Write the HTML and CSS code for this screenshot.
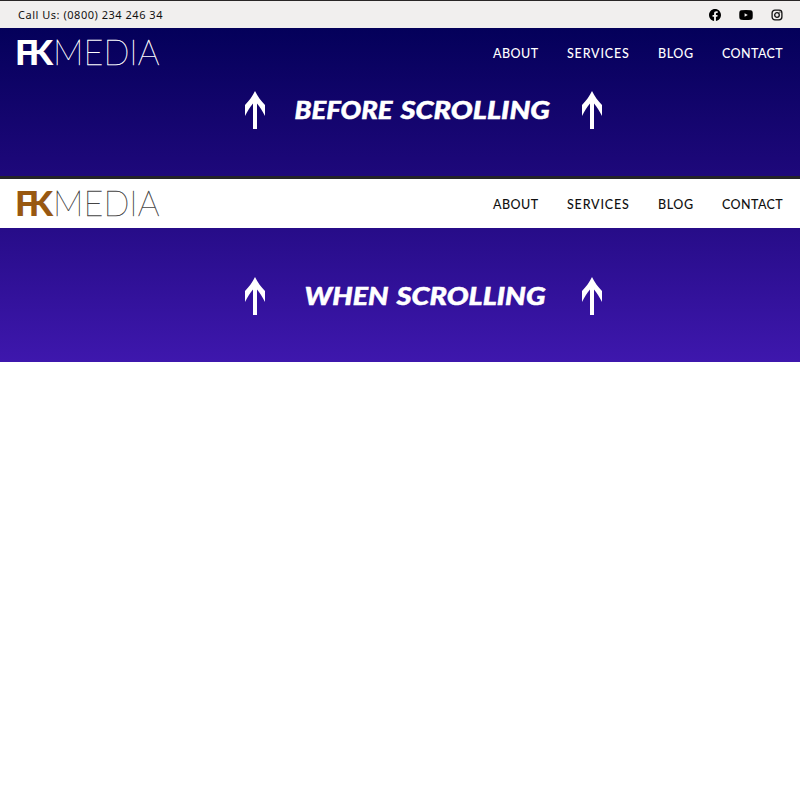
FILE: index.html
```html
<!DOCTYPE html>
<html lang="en">
<head>
<meta charset="utf-8">
<title>FK Media</title>
<link rel="stylesheet" href="styles.css">
</head>
<body>
<svg class="defs" aria-hidden="true">
  <symbol id="arrow" viewBox="0 0 22 38"><path d="M11 0C13.500 5 17 10 21 14V25C18.500 20 16 16 13 12.500V38H9V12.500C6 16 3.500 20 1 25V14C5 10 8.500 5 11 0Z"/></symbol>
</svg>
<div class="topbar">
  <span class="phone">Call Us: (0800) 234 246 34</span>
  <div class="social">
    <svg width="12" height="12" viewBox="0 0 24 24"><path d="M24 12.070C24 5.400 18.630 0 12 0S0 5.400 0 12.070c0 6.030 4.390 11.020 10.120 11.930v-8.440H7.080v-3.490h3.040V9.410c0-3.020 1.790-4.690 4.530-4.690 1.310 0 2.690.24 2.690.24v2.970h-1.520c-1.490 0-1.950.93-1.950 1.890v2.250h3.320l-.53 3.490h-2.790V24C19.610 23.090 24 18.100 24 12.070Z"/></svg>
    <svg width="14" height="10" viewBox="0 0 14 10"><path fill-rule="evenodd" d="M2.200.2Q7-.2 11.800.2 13.400.4 13.600 2q.3 3 0 6-.2 1.600-1.800 1.800-4.800.4-9.600 0Q.6 9.600.4 8 .1 5 .4 2 .6.400 2.200.2ZM5.600 3.200v3.600l3.200-1.800Z"/></svg>
    <svg class="instagram" width="12" height="12" viewBox="0 0 12 12"><rect x="1.100" y="1.100" width="9.800" height="9.800" rx="2.800"/><circle cx="6" cy="6" r="2.300"/><circle class="dot" cx="8.900" cy="3.100" r=".7"/></svg>
  </div>
</div>
<section class="before">
  <header class="header">
    <svg class="logo" width="144" height="34" viewBox="0 0 144 34">
      <text class="fk" x="-2" y="29" textLength="38" lengthAdjust="spacing">FK</text>
      <text class="media" x="36" y="29" textLength="106.500" lengthAdjust="spacingAndGlyphs">MEDIA</text>
    </svg>
    <nav class="nav"><a class="about">ABOUT</a><a class="services">SERVICES</a><a class="blog">BLOG</a><a class="contact">CONTACT</a></nav>
  </header>
  <div class="caption">
    <svg class="arrow"><use href="#arrow"/></svg>
    <svg class="title" width="315" height="38" viewBox="0 0 315 38">
      <text x="28.500" y="27.500" textLength="98" lengthAdjust="spacingAndGlyphs">BEFORE</text>
      <text x="134.500" y="27.500" textLength="149.500" lengthAdjust="spacingAndGlyphs">SCROLLING</text>
    </svg>
    <svg class="arrow"><use href="#arrow"/></svg>
  </div>
</section>
<section class="after">
  <header class="header">
    <svg class="logo" width="144" height="34" viewBox="0 0 144 34">
      <text class="fk" x="-2" y="29" textLength="38" lengthAdjust="spacing">FK</text>
      <text class="media" x="36" y="29" textLength="106.500" lengthAdjust="spacingAndGlyphs">MEDIA</text>
    </svg>
    <nav class="nav"><a class="about">ABOUT</a><a class="services">SERVICES</a><a class="blog">BLOG</a><a class="contact">CONTACT</a></nav>
  </header>
  <div class="caption">
    <svg class="arrow"><use href="#arrow"/></svg>
    <svg class="title" width="315" height="38" viewBox="0 0 315 38">
      <text x="38.500" y="27.500" textLength="84" lengthAdjust="spacingAndGlyphs">WHEN</text>
      <text x="130.500" y="27.500" textLength="149" lengthAdjust="spacingAndGlyphs">SCROLLING</text>
    </svg>
    <svg class="arrow"><use href="#arrow"/></svg>
  </div>
</section>
</body>
</html>
```
FILE: styles.css
```css
* { box-sizing: border-box; }
body { margin: 0; background: #fff; font-family: Lato, sans-serif; }
.defs { display: none; }
.topbar {
  display: flex; justify-content: space-between; align-items: center;
  height: 28px; padding: 0 17px 0 18px;
  background: #f1efee; border-top: 1px solid #292626; color: #111;
}
.phone { font: 11px/16px "Noto Sans", sans-serif; letter-spacing: .52px; white-space: nowrap; }
.social { display: flex; align-items: center; gap: 18px; padding-top: 1px; }
.social svg { display: block; }
.instagram { fill: none; stroke: #111; stroke-width: 1.3; }
.instagram .dot { fill: #111; stroke: none; }
.before { height: 148px; background: linear-gradient(#04005a, #1e087b); color: #fff; }
.after {
  height: 186px; border-top: 3px solid #242329; color: #111;
  background: linear-gradient(#1e087b, #3e17ad);
}
.header {
  display: flex; justify-content: space-between; align-items: center;
  height: 50px; padding: 0 17px;
}
.after .header { height: 49px; background: #fff; }
.logo { display: block; overflow: visible; }
.fk { font-size: 35px; font-weight: 900; fill: currentColor; }
.media { font-size: 35px; font-weight: 100; fill: currentColor; stroke: currentColor; stroke-width: .35px; }
.after .fk { fill: #985811; }
.after .media { fill: #444; stroke: #444; }
.nav {
  display: grid; grid-template-columns: 45px 62px 35px 61px; gap: 29px;
  padding-top: 2px;
  font-size: 12.5px; font-weight: 500; line-height: 16px; white-space: nowrap;
}
.about { letter-spacing: .45px; }
.services { letter-spacing: .82px; }
.blog { letter-spacing: .6px; }
.contact { letter-spacing: .4px; }
.caption { display: flex; padding: 13px 0 0 244px; color: #fff; }
.after .caption { padding-top: 49px; }
.arrow { width: 22px; height: 38px; fill: #fff; }
.title { fill: #fff; stroke: #fff; stroke-width: .5px; font-size: 25px; font-weight: 900; font-style: italic; }
```
